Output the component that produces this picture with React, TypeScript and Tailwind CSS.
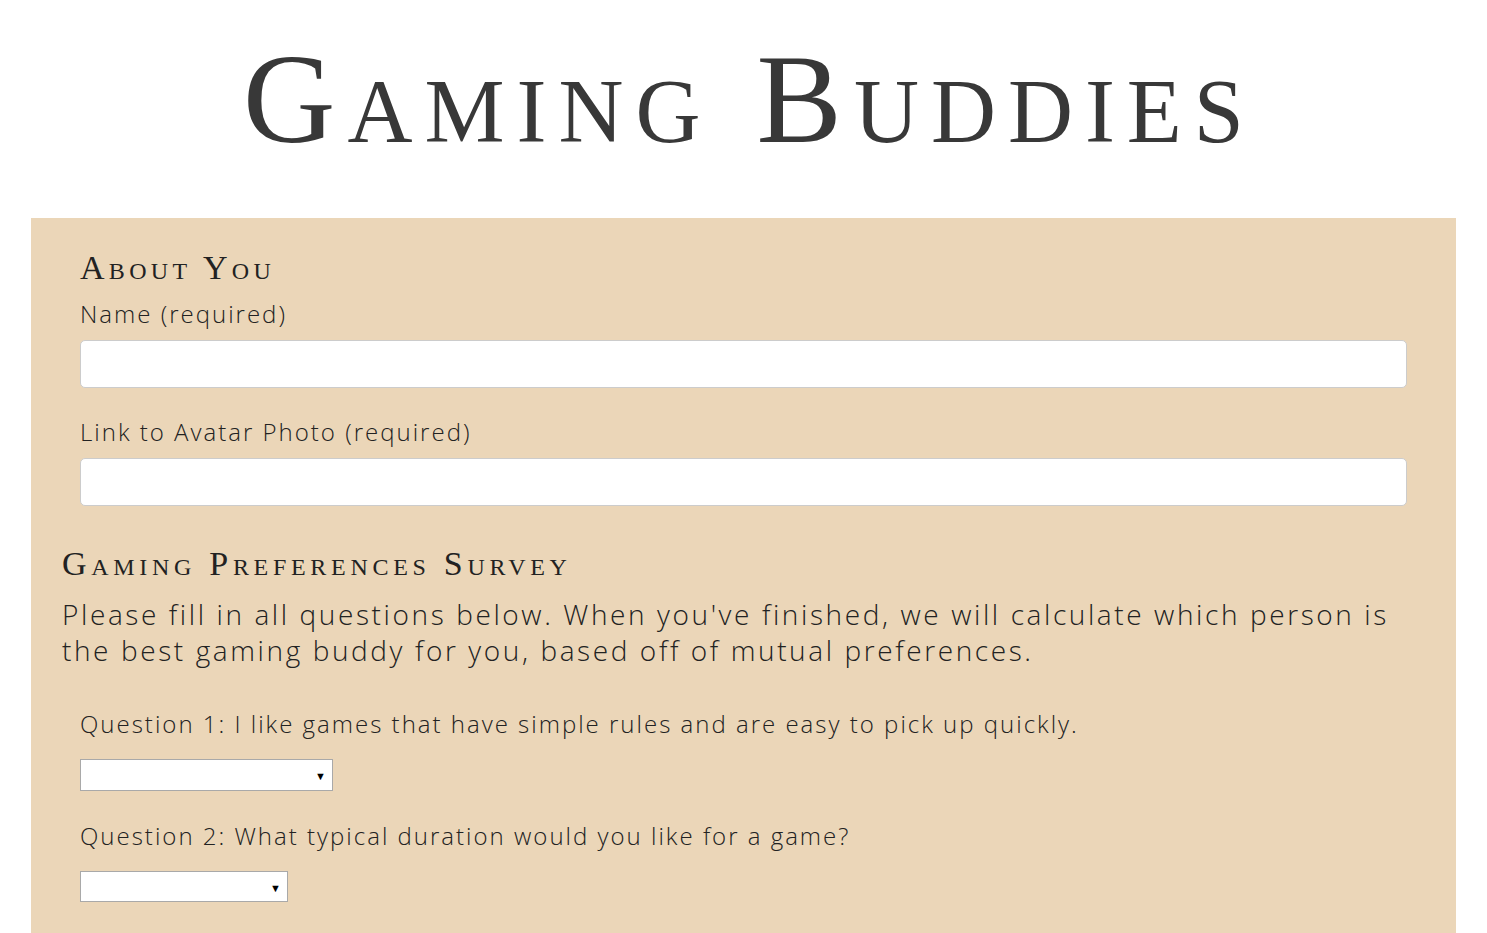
import React from "react";

const body = { fontFamily: '"Open Sans", "Noto Sans", sans-serif' };
const display = { fontFamily: '"Liberation Serif", "DejaVu Serif", serif' };

function Field({ label, className }: { label: string; className?: string }) {
  return (
    <div className={`flex flex-col ${className ?? ""}`}>
      <label
        className="text-[24px] leading-[34px] font-light tracking-[2px] text-[#222222]"
        style={body}
      >
        {label}
      </label>
      <input
        type="text"
        className="mt-[9px] h-[48px] w-full rounded-[5px] border border-[#cccccc] bg-white px-3 outline-none"
      />
    </div>
  );
}

function Question({
  text,
  width,
  height,
  className,
}: {
  text: string;
  width: string;
  height: string;
  className?: string;
}) {
  return (
    <div className={`flex flex-col ${className ?? ""}`}>
      <p
        className="text-[24px] leading-[34px] font-light tracking-[2px] text-[#222222]"
        style={body}
      >
        {text}
      </p>
      <div className={`relative mt-[18px] ${height} ${width}`}>
        <select className="h-full w-full appearance-none border border-[#a9a9a9] bg-white" />
        <span className="pointer-events-none absolute top-1/2 right-[7px] -translate-y-1/2 text-[11px] leading-none text-black">
          ▼
        </span>
      </div>
    </div>
  );
}

export default function App() {
  return (
    <div className="min-h-screen bg-white">
      <header className="flex h-[218px] items-start justify-center pt-[24px]">
        <h1
          className="pl-[12px] text-[128px] leading-[150px] tracking-[12px] text-[#383838] [font-variant:small-caps]"
          style={display}
        >
          Gaming Buddies
        </h1>
      </header>

      <main className="mx-[31px] bg-[#ebd6b8] pt-[30px] pb-[60px]">
        <section className="flex flex-col px-[49px]">
          <h2
            className="text-[34px] leading-[40px] tracking-[4.3px] text-[#222222] [font-variant:small-caps]"
            style={display}
          >
            About You
          </h2>
          <Field label="Name (required)" className="mt-[9px]" />
          <Field label="Link to Avatar Photo (required)" className="mt-[27px]" />
        </section>

        <section className="mt-[38px] px-[31px]">
          <h2
            className="text-[34px] leading-[40px] tracking-[4.7px] text-[#222222] [font-variant:small-caps]"
            style={display}
          >
            Gaming Preferences Survey
          </h2>
          <p
            className="mt-[12px] text-[28px] leading-[36px] font-light tracking-[2.6px] text-[#222222]"
            style={body}
          >
            Please fill in all questions below. When you've finished, we will calculate which
            person is the best gaming buddy for you, based off of mutual preferences.
          </p>
        </section>

        <section className="mt-[39px] flex flex-col px-[49px]">
          <Question
            text="Question 1: I like games that have simple rules and are easy to pick up quickly."
            width="w-[253px]"
            height="h-[32px]"
          />
          <Question
            text="Question 2: What typical duration would you like for a game?"
            width="w-[208px]"
            height="h-[31px]"
            className="mt-[28px]"
          />
        </section>
      </main>
    </div>
  );
}
